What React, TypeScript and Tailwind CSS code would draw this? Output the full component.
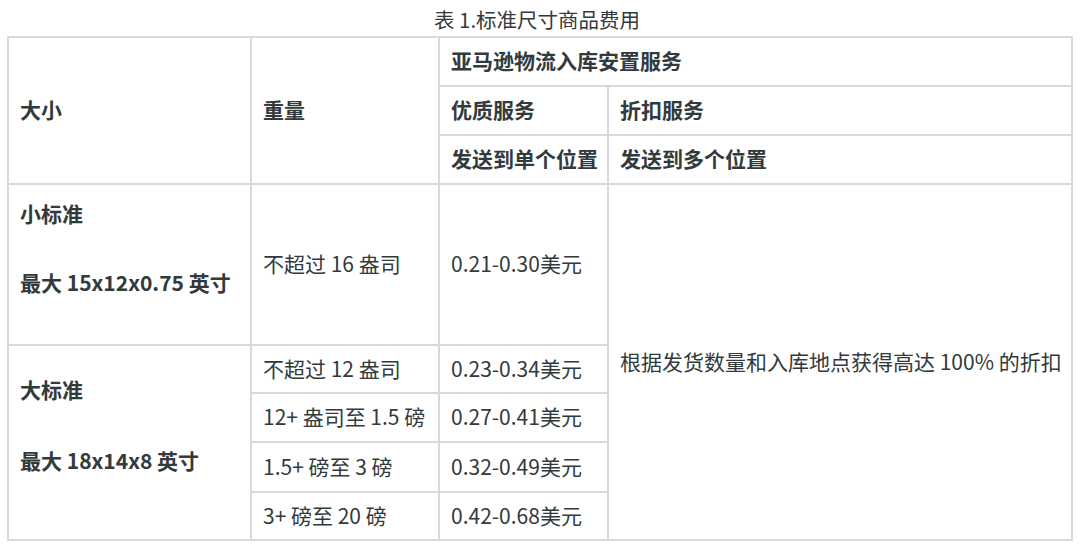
const font = { fontFamily: '"Noto Sans CJK SC", "Noto Sans", sans-serif' };

const weights = [
    { label: '不超过 12 盎司', price: '0.23-0.34美元', h: 'h-[48px]' },
    { label: '12+ 盎司至 1.5 磅', price: '0.27-0.41美元', h: 'h-[49px]' },
    { label: '1.5+ 磅至 3 磅', price: '0.32-0.49美元', h: 'h-[50px]' },
    { label: '3+ 磅至 20 磅', price: '0.42-0.68美元', h: 'h-[48px]' },
];

const cell = 'border-2 border-[#d9d9d9] px-[11px] pb-[3px] align-middle whitespace-nowrap';

export default function App() {
    return (
        <div className="w-[1080px] h-[548px] bg-white text-[#323a3c] overflow-hidden" style={font}>
            {/* Caption */}
            <div className="h-[36px] pt-[2px] flex items-center justify-center text-[20.5px] pr-[6px]">
                表 1.标准尺寸商品费用
            </div>

            <table className="ml-[7px] w-[1064px] table-fixed border-collapse text-[21px] leading-[30px]">
                <colgroup>
                    <col className="w-[243px]" />
                    <col className="w-[188px]" />
                    <col className="w-[169px]" />
                    <col className="w-[464px]" />
                </colgroup>
                <tbody>
                    <tr className="h-[49px]">
                        <th rowSpan={3} className={`${cell} text-left font-bold`}>大小</th>
                        <th rowSpan={3} className={`${cell} text-left font-bold`}>重量</th>
                        <th colSpan={2} className={`${cell} text-left font-bold`}>亚马逊物流入库安置服务</th>
                    </tr>
                    <tr className="h-[49px]">
                        <th className={`${cell} text-left font-bold`}>优质服务</th>
                        <th className={`${cell} text-left font-bold`}>折扣服务</th>
                    </tr>
                    <tr className="h-[49px]">
                        <th className={`${cell} text-left font-bold`}>发送到单个位置</th>
                        <th className={`${cell} text-left font-bold`}>发送到多个位置</th>
                    </tr>

                    {/* Small standard */}
                    <tr className="h-[161px]">
                        <td className={`${cell} !align-top pt-[13px] font-bold`}>
                            <p>小标准</p>
                            <p className="mt-[39px]">最大 15x12x0.75 英寸</p>
                        </td>
                        <td className={cell}>不超过 16 盎司</td>
                        <td className={cell}>0.21-0.30美元</td>
                        <td rowSpan={5} className={cell}>根据发货数量和入库地点获得高达 100% 的折扣</td>
                    </tr>

                    {/* Large standard */}
                    {weights.map((w, i) => (
                        <tr key={w.label} className={w.h}>
                            {i === 0 && (
                                <td rowSpan={4} className={`${cell} !align-top pt-[28px] font-bold`}>
                                    <p>大标准</p>
                                    <p className="mt-[41px]">最大 18x14x8 英寸</p>
                                </td>
                            )}
                            <td className={cell}>{w.label}</td>
                            <td className={cell}>{w.price}</td>
                        </tr>
                    ))}
                </tbody>
            </table>
        </div>
    );
}
